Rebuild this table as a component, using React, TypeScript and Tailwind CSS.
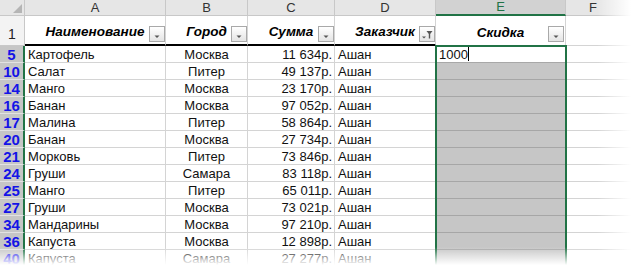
import React from "react";

type Row = { n: number; name: string; city: string; sum: string; client: string };

const rows: Row[] = [
  { n: 5, name: "Картофель", city: "Москва", sum: "11 634р.", client: "Ашан" },
  { n: 10, name: "Салат", city: "Питер", sum: "49 137р.", client: "Ашан" },
  { n: 14, name: "Манго", city: "Москва", sum: "23 170р.", client: "Ашан" },
  { n: 16, name: "Банан", city: "Москва", sum: "97 052р.", client: "Ашан" },
  { n: 17, name: "Малина", city: "Питер", sum: "58 864р.", client: "Ашан" },
  { n: 20, name: "Банан", city: "Москва", sum: "27 734р.", client: "Ашан" },
  { n: 21, name: "Морковь", city: "Питер", sum: "73 846р.", client: "Ашан" },
  { n: 24, name: "Груши", city: "Самара", sum: "83 118р.", client: "Ашан" },
  { n: 25, name: "Манго", city: "Питер", sum: "65 011р.", client: "Ашан" },
  { n: 27, name: "Груши", city: "Москва", sum: "73 021р.", client: "Ашан" },
  { n: 34, name: "Мандарины", city: "Москва", sum: "97 210р.", client: "Ашан" },
  { n: 36, name: "Капуста", city: "Москва", sum: "12 898р.", client: "Ашан" },
  { n: 40, name: "Капуста", city: "Самара", sum: "27 277р.", client: "Ашан" },
];

function FilterButton({ active = false }: { active?: boolean }) {
  return (
    <div className="absolute right-0 bottom-[2px] w-[16px] h-[16px] border border-[#a9a9a9] bg-gradient-to-b from-[#ffffff] to-[#e4e4e4] flex items-end justify-center">
      {active ? (
        <svg width="14" height="14" viewBox="0 0 14 14" className="block">
          <path d="M2 9.5 L6 9.5 L4 11.5 Z" fill="#555" />
          <path d="M6.5 4 L12.5 4 L10.2 7 L10.2 11.5 L8.8 11.5 L8.8 7 Z" fill="#555" />
        </svg>
      ) : (
        <svg width="14" height="14" viewBox="0 0 14 14" className="block">
          <path d="M4.5 8.5 L9.5 8.5 L7 11 Z" fill="#555" />
        </svg>
      )}
    </div>
  );
}

const cellText = "font-['Liberation_Sans',Arial,sans-serif] text-[13px] text-[#111] leading-none";

export default function App() {
  return (
    <div className="relative w-[631px] h-[265px] overflow-hidden bg-white">
      {/* column letters */}
      <div className="flex h-[16px] font-['Liberation_Sans',Arial,sans-serif] text-[13px] text-[#333]">
        <div className="relative w-[25px] shrink-0 bg-[#e6e6e6] border-r border-b border-[#c8c8c8]">
          <svg width="9" height="9" viewBox="0 0 9 9" className="absolute right-[2px] bottom-[2px]">
            <path d="M9 0 L9 9 L0 9 Z" fill="#b5b5b5" />
          </svg>
        </div>
        <div className="w-[141px] shrink-0 bg-[#e6e6e6] border-r border-b border-[#c8c8c8] flex items-center justify-center">A</div>
        <div className="w-[82px] shrink-0 bg-[#e6e6e6] border-r border-b border-[#c8c8c8] flex items-center justify-center">B</div>
        <div className="w-[87px] shrink-0 bg-[#e6e6e6] border-r border-b border-[#c8c8c8] flex items-center justify-center">C</div>
        <div className="w-[101px] shrink-0 bg-[#e6e6e6] border-r border-b border-[#c8c8c8] flex items-center justify-center">D</div>
        <div className="w-[130px] shrink-0 bg-[#d2d2d2] border-r border-[#c8c8c8] border-b-2 border-b-[#217346] flex items-center justify-center text-[#217346]">E</div>
        <div className="flex-1 bg-[#e6e6e6] border-b border-[#c8c8c8] flex items-center justify-start pl-[23px]">F</div>
      </div>

      {/* table header row */}
      <div className="flex h-[30px]">
        <div className="w-[25px] shrink-0 bg-[#f3f3f3] border-r border-b border-[#c8c8c8] flex items-end justify-center pb-[4px] font-['Liberation_Sans',Arial,sans-serif] text-[14px] text-[#222] leading-none">
          1
        </div>
        {[
          { w: "w-[141px]", t: "Наименование", a: false },
          { w: "w-[82px]", t: "Город", a: false },
          { w: "w-[87px]", t: "Сумма", a: false },
          { w: "w-[101px]", t: "Заказчик", a: true },
        ].map((h) => (
          <div
            key={h.t}
            className={`${h.w} relative shrink-0 border-r border-[#d4d4d4] border-b-2 border-b-black flex items-end justify-center pb-[6px] font-['Liberation_Sans',Arial,sans-serif] text-[13.5px] font-bold italic text-black leading-none`}
          >
            {h.t}
            <FilterButton active={h.a} />
          </div>
        ))}
        <div className="w-[130px] relative shrink-0 border-r border-[#d4d4d4] flex items-end justify-center pb-[7px] font-['Liberation_Sans',Arial,sans-serif] text-[13.5px] font-bold italic text-black leading-none">
          Скидка
          <div className="absolute right-[1px] bottom-[2px]">
            <div className="relative w-[16px] h-[16px]">
              <FilterButton />
            </div>
          </div>
        </div>
        <div className="flex-1 border-b border-[#d4d4d4]" />
      </div>

      {/* data rows */}
      <div className="relative">
        {rows.map((r, i) => (
          <div key={r.n} className="flex h-[17px]">
            <div className="w-[25px] shrink-0 bg-[#c6c6c6] border-b border-[#e2e2e2] border-r-2 border-r-[#217346] flex items-center justify-center font-['Liberation_Sans',Arial,sans-serif] text-[15px] font-bold text-[#1414e6] leading-none">
              {r.n}
            </div>
            <div className={`w-[141px] shrink-0 border-r border-b border-[#d4d4d4] flex items-center pl-[3px] ${cellText}`}>{r.name}</div>
            <div className={`w-[82px] shrink-0 border-r border-b border-[#d4d4d4] flex items-center justify-center ${cellText}`}>{r.city}</div>
            <div className={`w-[87px] shrink-0 border-r border-b border-[#d4d4d4] flex items-center justify-end pr-[2px] ${cellText}`}>{r.sum}</div>
            <div className={`w-[101px] shrink-0 border-r border-b border-[#d4d4d4] flex items-center pl-[3px] ${cellText}`}>{r.client}</div>
            {i === 0 ? (
              <div className={`w-[130px] shrink-0 bg-white border-b border-[#a8a8a8] flex items-center pl-[3px] ${cellText}`}>
                1000
                <span className="inline-block w-[1px] h-[14px] bg-black" />
              </div>
            ) : (
              <div className="w-[130px] shrink-0 bg-[#c6c6c6] border-b border-[#a6a6a6]" />
            )}
            <div className="flex-1 border-b border-[#d4d4d4]" />
          </div>
        ))}
        {/* selection outline on column E */}
        <div className="absolute top-[-1px] left-[435px] w-[132px] h-[240px] border-2 border-[#217346] pointer-events-none" />
      </div>

      {/* soft edges */}
      <div className="absolute top-0 right-0 bottom-0 w-[34px] bg-gradient-to-r from-transparent to-white pointer-events-none" />
      <div className="absolute left-0 right-0 bottom-0 h-[18px] bg-gradient-to-b from-transparent to-white pointer-events-none" />
    </div>
  );
}
